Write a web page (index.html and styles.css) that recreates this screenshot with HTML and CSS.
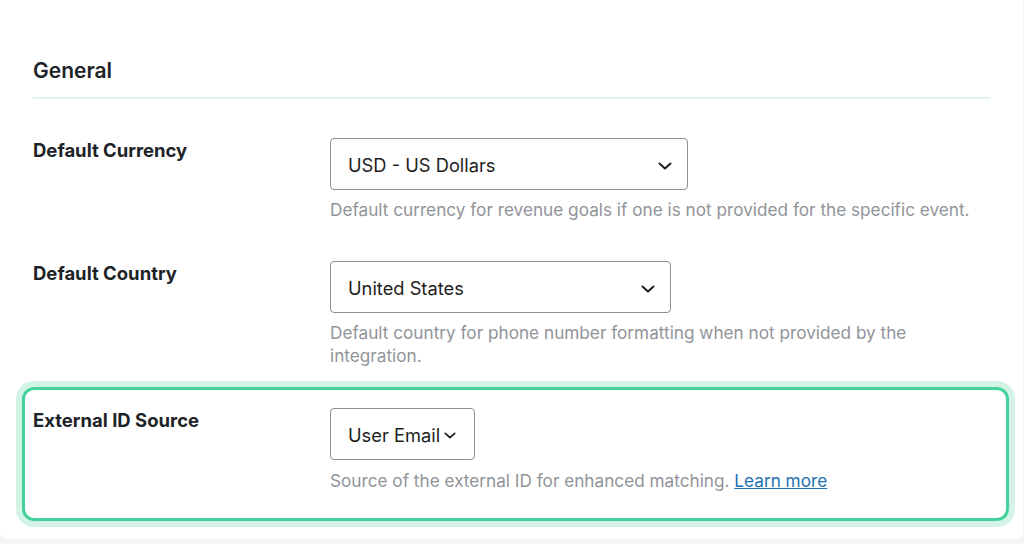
FILE: index.html
```html
<!DOCTYPE html>
<html lang="en">
<head>
<meta charset="utf-8">
<title>General settings</title>
<link rel="stylesheet" href="styles.css">
</head>
<body>
<div class="card">
  <h2 class="section-title">General</h2>
  <div class="row">
    <div class="label">Default Currency</div>
    <div class="field">
      <div class="select w-currency"><span>USD - US Dollars</span><svg class="chev" viewBox="0 0 14 8" width="14" height="8"><path d="M1.5 1.5 L7 6.5 L12.5 1.5" fill="none" stroke="#1e1e1e" stroke-width="2" stroke-linecap="round" stroke-linejoin="round"/></svg></div>
      <p class="desc">Default currency for revenue goals if one is not provided for the specific event.</p>
    </div>
  </div>
  <div class="row">
    <div class="label">Default Country</div>
    <div class="field">
      <div class="select w-country"><span>United States</span><svg class="chev" viewBox="0 0 14 8" width="14" height="8"><path d="M1.5 1.5 L7 6.5 L12.5 1.5" fill="none" stroke="#1e1e1e" stroke-width="2" stroke-linecap="round" stroke-linejoin="round"/></svg></div>
      <p class="desc">Default country for phone number formatting when not provided by the integration.</p>
    </div>
  </div>
  <div class="row highlight">
    <div class="label">External ID Source</div>
    <div class="field">
      <div class="select compact"><span>User Email</span><svg class="chev" viewBox="0 0 14 8" width="12" height="7"><path d="M1.5 1.5 L7 6.5 L12.5 1.5" fill="none" stroke="#1e1e1e" stroke-width="2" stroke-linecap="round" stroke-linejoin="round"/></svg></div>
      <p class="desc">Source of the external ID for enhanced matching. <a href="#">Learn more</a></p>
    </div>
  </div>
</div>
</body>
</html>
```

FILE: styles.css
```css
* { box-sizing: border-box; }
html, body { margin: 0; padding: 0; }
body {
  background: #f4f5f5;
  font-family: Inter, "Noto Sans", "Liberation Sans", sans-serif;
  color: #1d2327;
  overflow: hidden;
}
.card {
  background: #fff;
  margin: -6px 1px 0 0;
  border-radius: 8px;
  padding: 63px 33px 18px 33px;
}
.section-title {
  margin: 0;
  font-size: 21px;
  line-height: 27px;
  font-weight: 600;
  color: #1d2327;
  padding-bottom: 13px;
  border-bottom: 2px solid #e3f2ef;
}
.row {
  display: grid;
  grid-template-columns: 297px 1fr;
  padding-top: 39px;
}
.row + .row { padding-top: 40px; }
.label {
  font-size: 18.5px;
  font-weight: 650;
  line-height: 24px;
  color: #1d2327;
}
.select {
  height: 52px;
  border: 1px solid #8c8f94;
  border-radius: 4px;
  display: flex;
  align-items: center;
  justify-content: space-between;
  padding: 1px 15px 0 17px;
  font-size: 18.3px;
  color: #1e1e1e;
  background: #fff;
}
.w-currency { width: 358px; }
.w-country { width: 341px; }
.select.compact {
  display: inline-flex;
  justify-content: flex-start;
  gap: 4px;
  padding-right: 18px;
}
.chev { display: block; margin-top: 2px; }
.desc {
  margin: 8px 0 0 0;
  font-size: 17.2px;
  line-height: 23px;
  color: #919499;
}
.desc a { color: #2271b1; text-decoration: underline; }
.row.highlight {
  margin: 20px -19px 0 -11px;
  padding: 18px 19px 26px 8px;
  border: 3px solid #45d19b;
  border-radius: 12px;
  box-shadow: 0 0 0 6px #d2f3e6;
}
.row.highlight .desc { margin-top: 9px; }
```
